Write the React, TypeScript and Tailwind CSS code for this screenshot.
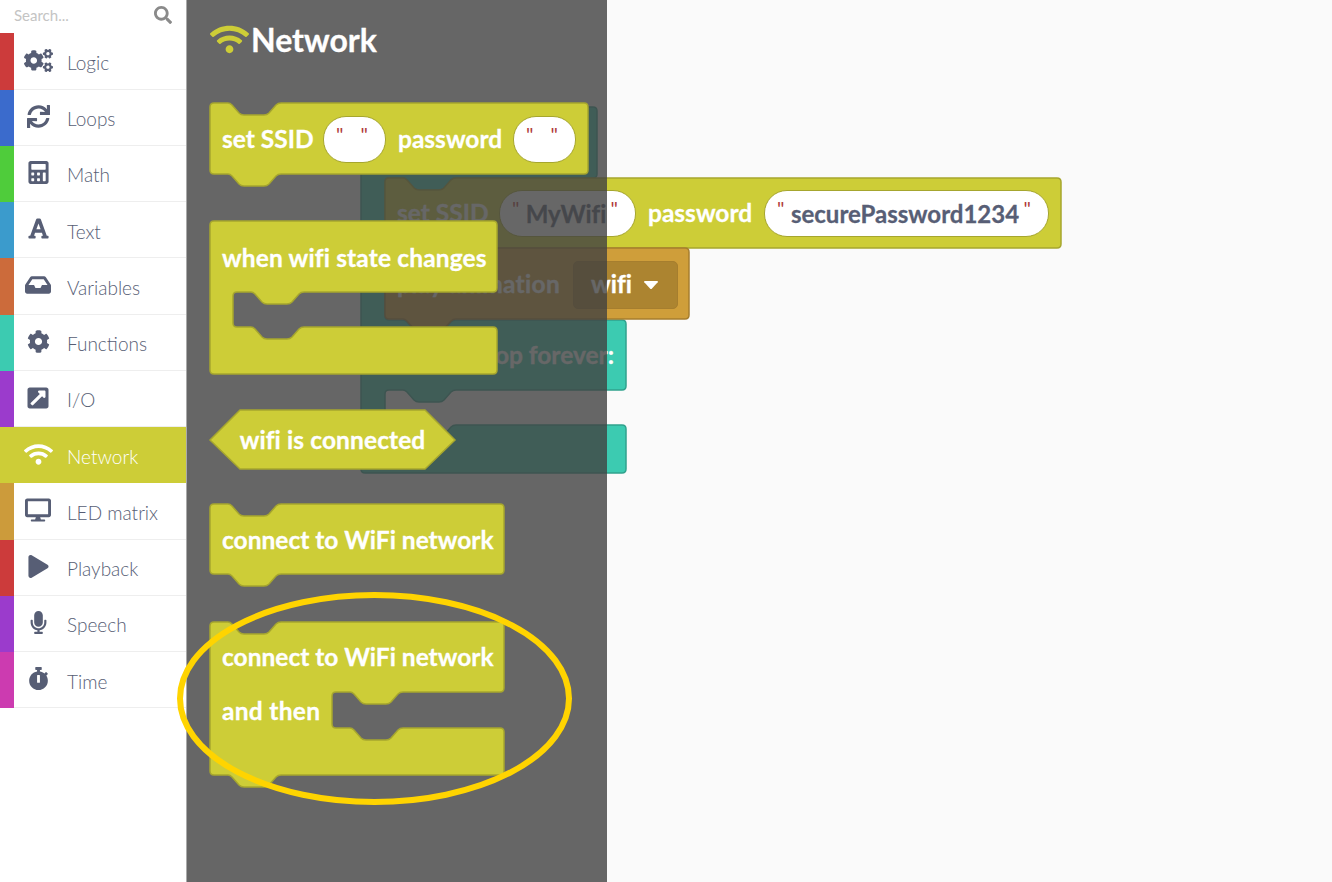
import type { ReactNode } from 'react';
import {
  FaCalculator,
  FaCog,
  FaCogs,
  FaDesktop,
  FaExternalLinkSquareAlt,
  FaFont,
  FaInbox,
  FaMicrophone,
  FaPlay,
  FaSearch,
  FaStopwatch,
  FaSync,
  FaWifi,
} from 'react-icons/fa';

const categories = [
  { name: 'Logic', strip: 'bg-[#cc3b3b]', icon: <FaCogs size={29} /> },
  { name: 'Loops', strip: 'bg-[#3b6bcc]', icon: <FaSync size={23} /> },
  { name: 'Math', strip: 'bg-[#4fcc3b]', icon: <FaCalculator size={23} /> },
  { name: 'Text', strip: 'bg-[#3b9bcc]', icon: <FaFont size={23} /> },
  { name: 'Variables', strip: 'bg-[#cc6b3b]', icon: <FaInbox size={26} /> },
  { name: 'Functions', strip: 'bg-[#3ccbb1]', icon: <FaCog size={23} /> },
  { name: 'I/O', strip: 'bg-[#9b3bcc]', icon: <FaExternalLinkSquareAlt size={24} /> },
  { name: 'Network', strip: 'bg-[#cdcd37]', icon: <FaWifi size={29} />, active: true },
  { name: 'LED matrix', strip: 'bg-[#cc9b3b]', icon: <FaDesktop size={26} /> },
  { name: 'Playback', strip: 'bg-[#cc3b3b]', icon: <FaPlay size={23} /> },
  { name: 'Speech', strip: 'bg-[#9b3bcc]', icon: <FaMicrophone size={23} /> },
  { name: 'Time', strip: 'bg-[#cc3bb0]', icon: <FaStopwatch size={23} /> },
];

// puzzle notch, drawn left to right or right to left, x is the block edge it hangs off
const notchR = (x: number, y: number) =>
  `L${x + 18} ${y} Q${x + 20} ${y} ${x + 22} ${y + 2} L${x + 29} ${y + 10} Q${x + 31} ${y + 12} ${x + 34} ${y + 12} L${x + 54} ${y + 12} Q${x + 57} ${y + 12} ${x + 59} ${y + 10} L${x + 66} ${y + 2} Q${x + 68} ${y} ${x + 71} ${y} `;
const notchL = (x: number, y: number) =>
  `L${x + 71} ${y} Q${x + 68} ${y} ${x + 66} ${y + 2} L${x + 59} ${y + 10} Q${x + 57} ${y + 12} ${x + 54} ${y + 12} L${x + 34} ${y + 12} Q${x + 31} ${y + 12} ${x + 29} ${y + 10} L${x + 22} ${y + 2} Q${x + 20} ${y} ${x + 18} ${y} `;

const cornerTR = (w: number, y: number) => `L${w - 4} ${y} Q${w} ${y} ${w} ${y + 4} `;
const cornerBR = (w: number, y: number) => `L${w} ${y - 4} Q${w} ${y} ${w - 4} ${y} `;

const stackPath = (w: number, h: number, top = true, bottom = true) =>
  `M0 4 Q0 0 4 0 ${top ? notchR(0, 0) : ''}${cornerTR(w, 0)}${cornerBR(w, h)}${bottom ? notchL(0, h) : ''}L4 ${h} Q0 ${h} 0 ${h - 4} Z`;

// block with one open statement slot: arm on top, arm below, the slot starts at inset
const slotPath = (w: number, armBottom: number, slotBottom: number, h: number, inset: number, top: boolean, bottom: boolean) =>
  `M0 4 Q0 0 4 0 ${top ? notchR(0, 0) : ''}${cornerTR(w, 0)}${cornerBR(w, armBottom)}${notchL(inset, armBottom)}` +
  `L${inset + 4} ${armBottom} Q${inset} ${armBottom} ${inset} ${armBottom + 4} L${inset} ${slotBottom - 4} Q${inset} ${slotBottom} ${inset + 4} ${slotBottom} ` +
  `${notchR(inset, slotBottom)}${cornerTR(w, slotBottom)}${cornerBR(w, h)}${bottom ? notchL(0, h) : ''}L4 ${h} Q0 ${h} 0 ${h - 4} Z`;

const tealPath =
  `M0 4 Q0 0 4 0 ${cornerTR(236, 0)}${cornerBR(236, 71)}${notchL(24, 71)}L28 71 Q24 71 24 75 L24 209 Q24 213 28 213 ` +
  `${notchR(24, 213)}${cornerTR(265, 213)}${cornerBR(265, 283)}${notchL(24, 283)}L28 283 Q24 283 24 287 L24 314 Q24 318 28 318 ` +
  `${notchR(24, 318)}${cornerTR(265, 318)}${cornerBR(265, 366)}L4 366 Q0 366 0 362 L0 4 Z`;

function Shape({ d, fill, stroke }: { d: string; fill: string; stroke: string }) {
  return (
    <svg className="absolute inset-0 w-full h-full overflow-visible">
      <path d={d} fill={fill} stroke={stroke} strokeWidth={1.5} />
    </svg>
  );
}

function Label({ children, className = '' }: { children: ReactNode; className?: string }) {
  return (
    <span className={`text-white font-bold text-[24.5px] leading-none whitespace-nowrap [font-variant-ligatures:none] [-webkit-text-stroke:0.3px_#ffffff] ${className}`}>
      {children}
    </span>
  );
}

function Pill({ text, className }: { text?: string; className: string }) {
  return (
    <span className={`flex shrink-0 justify-between bg-white border border-[#a6a62e] rounded-[23px] h-[47px] pl-[12px] pr-[17px] pt-[2px] ${className}`}>
      <span className="text-[#b03a3a] font-normal text-[20px] leading-[30px]">"</span>
      {text && (
        <span className="self-center -mt-[2px] ml-[2px] text-[#575e75] font-bold text-[24px] leading-none whitespace-nowrap [font-variant-ligatures:none] [-webkit-text-stroke:0.3px_#575e75]">
          {text}
        </span>
      )}
      <span className="text-[#b03a3a] font-normal text-[20px] leading-[30px]">"</span>
    </span>
  );
}

function Sidebar() {
  return (
    <aside className="relative z-10 w-[187px] shrink-0 bg-white border-r border-[#aaaaaa]">
      <div className="flex items-center h-[33.4px] pl-[14px] pr-[14px]">
        <input
          placeholder="Search..."
          className="w-0 flex-1 -mt-[3px] text-[15px] font-normal text-[#575e75] placeholder:text-[#c4c4c4] outline-none"
        />
        <FaSearch size={18} className="text-[#8a8a8a] -mt-[3px]" />
      </div>
      {categories.map((c) => (
        <div
          key={c.name}
          className={`flex h-[56.25px] ${c.active ? 'bg-[#cdcd37] text-white' : 'text-[#575e75]'}`}
        >
          <div className={`w-[14px] shrink-0 ${c.strip}`} />
          <div className={`flex flex-1 items-center ${c.active ? '' : 'border-b border-[#eeeeee]'}`}>
            <span className="flex w-[48px] justify-center -mt-[2px]">{c.icon}</span>
            <span className="ml-[5px] mt-[4px] text-[19px] font-light">{c.name}</span>
          </div>
        </div>
      ))}
    </aside>
  );
}

function Workspace() {
  return (
    <>
      <div className="absolute left-[174px] top-[107px] w-[266px] h-[366px]">
        <Shape d={tealPath} fill="#3ccbb1" stroke="#30a28d" />
        <div className="absolute right-[13px] top-[213px] h-[70px] flex items-center">
          <Label>loop forever:</Label>
        </div>
      </div>
      <div className="absolute left-[198px] top-[178px] w-[676px] h-[70px]">
        <Shape d={stackPath(676, 70)} fill="#cdcd37" stroke="#a6a62e" />
        <div className="relative flex items-center gap-[11px] h-full pl-3 pt-[1px]">
          <Label className="w-[91px]">set SSID</Label>
          <Pill text="MyWifi" className="w-[137px]" />
          <Label className="w-[106px] pl-[1px]">password</Label>
          <Pill text="securePassword1234" className="w-[285px]" />
        </div>
      </div>
      <div className="absolute left-[198px] top-[248px] w-[304px] h-[72px]">
        <Shape d={stackPath(304, 71)} fill="#cf9e3a" stroke="#a67e2e" />
        <div className="relative flex items-center h-full pl-3 pt-[1px]">
          <Label className="w-[166px] tracking-[0.3px]">play animation</Label>
          <span className="flex items-center ml-[10px] h-[48px] w-[105px] pl-[17px] rounded-[5px] bg-[#ac8430] border border-[#a67e2e]">
            <Label>wifi</Label>
            <svg width="16" height="10" viewBox="0 0 16 10" className="ml-[11px]">
              <path d="M2 1h12q1.500 0 .7 1.200L9 8.500q-1 1-2 0L1.300 2.200Q.500 1 2 1z" fill="#fff" />
            </svg>
          </span>
        </div>
      </div>
    </>
  );
}

function Flyout() {
  return (
    <div className="absolute left-0 top-0 bottom-0 w-[420px] bg-[#414141]/80">
      <div className="flex items-center h-[80px] pl-[23px]">
        <FaWifi size={39} className="text-[#cdcd37] -mt-[1px]" />
        <span className="ml-[2px] text-white font-bold text-[32px] leading-none [-webkit-text-stroke:0.3px_#ffffff]">Network</span>
      </div>

      <div className="absolute left-[23px] top-[103px] w-[379px] h-[71px]">
        <Shape d={stackPath(378, 71)} fill="#cdcd37" stroke="#a6a62e" />
        <div className="relative flex items-center gap-[11px] h-full pl-3 pt-[2px]">
          <Label className="w-[90px]">set SSID</Label>
          <Pill className="w-[63px]" />
          <Label className="w-[105px] pl-[1px]">password</Label>
          <Pill className="w-[63px]" />
        </div>
      </div>

      <div className="absolute left-[23px] top-[221px] w-[288px] h-[153px]">
        <Shape d={slotPath(287, 71, 106, 153, 23, false, false)} fill="#cdcd37" stroke="#a6a62e" />
        <div className="relative flex items-center h-[71px] pl-3 pt-[3px]">
          <Label className="tracking-[0.15px]">when wifi state changes</Label>
        </div>
      </div>

      <div className="absolute left-[23px] top-[410px] w-[245px] h-[59px]">
        <Shape d="M0 30 L30 0 L215 0 L245 30 L215 59 L30 59 Z" fill="#cdcd37" stroke="#a6a62e" />
        <div className="relative flex items-center justify-center h-full pt-[1px]">
          <Label className="tracking-[0.1px]">wifi is connected</Label>
        </div>
      </div>

      <div className="absolute left-[23px] top-[504px] w-[295px] h-[70px]">
        <Shape d={stackPath(294, 70)} fill="#cdcd37" stroke="#a6a62e" />
        <div className="relative flex items-center h-full pl-3 pt-[2px]">
          <Label>connect to WiFi network</Label>
        </div>
      </div>

      <div className="absolute left-[23px] top-[622px] w-[295px] h-[153px]">
        <Shape d={slotPath(294, 70, 106, 153, 122, true, true)} fill="#cdcd37" stroke="#a6a62e" />
        <div className="relative flex items-center h-[70px] pl-3 pt-[1px]">
          <Label>connect to WiFi network</Label>
        </div>
        <div className="relative flex items-center h-[38px] pl-3">
          <Label className="tracking-[0.3px]">and then</Label>
        </div>
      </div>
    </div>
  );
}

export default function App() {
  return (
    <div className="relative flex w-[1332px] h-[882px] overflow-hidden bg-[#fafafa] font-['Lato',sans-serif]">
      <Sidebar />
      <main className="relative flex-1">
        <Workspace />
        <Flyout />
      </main>
      {/* highlight drawn over the screenshot */}
      <svg className="absolute left-[177px] top-[592px] z-20 w-[395px] h-[213px]" viewBox="0 0 395 213">
        <ellipse cx="197.5" cy="106.5" rx="194.5" ry="103.500" fill="none" stroke="#ffd400" strokeWidth={6} />
      </svg>
    </div>
  );
}
